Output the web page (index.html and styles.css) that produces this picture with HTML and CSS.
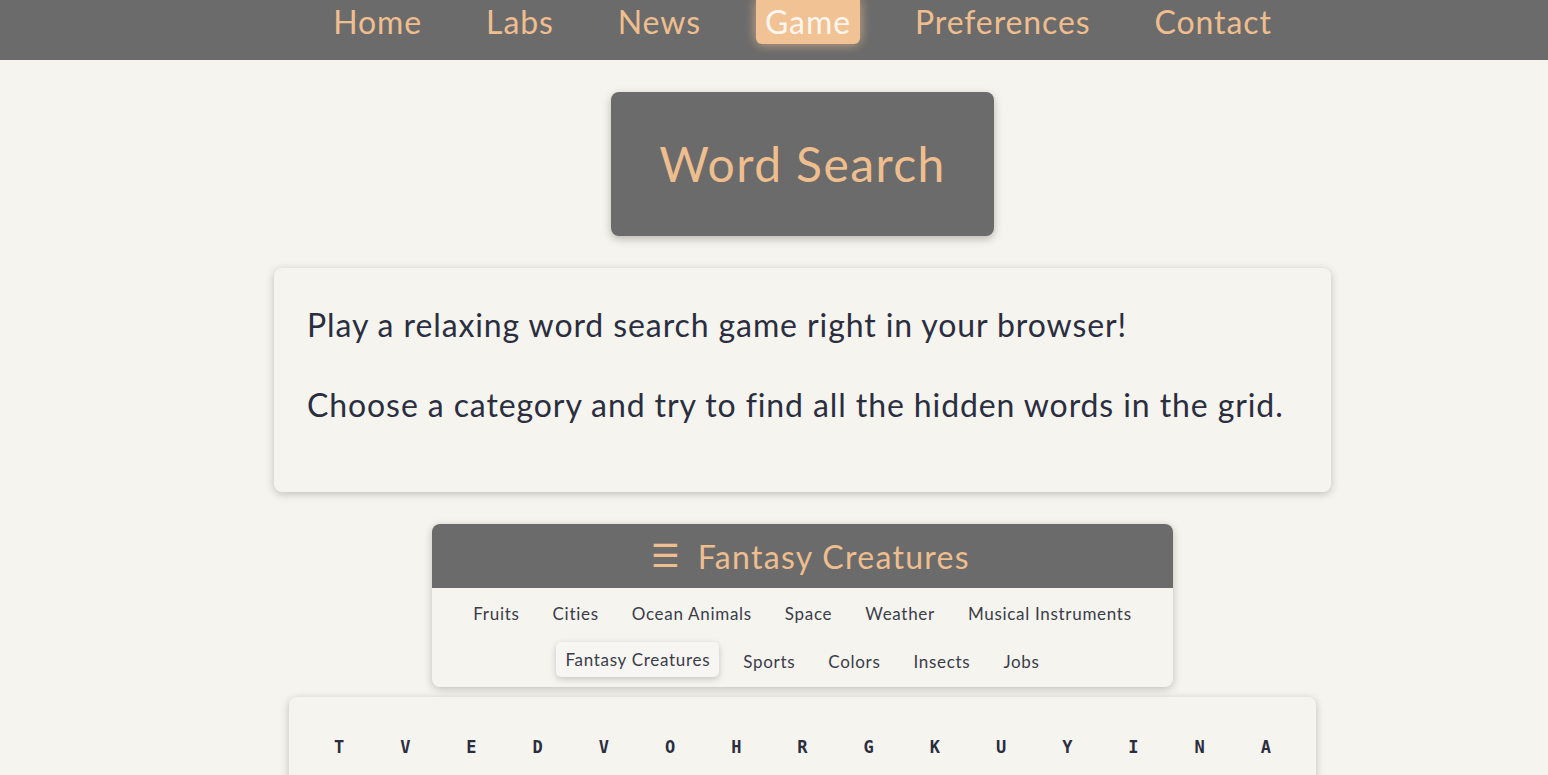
FILE: index.html
```html
<!DOCTYPE html>
<html lang="en">
<head>
<meta charset="utf-8">
<title>Word Search</title>
<link rel="stylesheet" href="styles.css">
</head>
<body>
<nav class="topnav">
  <a class="nav-item">Home</a>
  <a class="nav-item">Labs</a>
  <a class="nav-item">News</a>
  <a class="nav-item active">Game</a>
  <a class="nav-item">Preferences</a>
  <a class="nav-item">Contact</a>
</nav>
<main class="main">
  <div class="title-wrap">
    <h1 class="title-box">Word Search</h1>
  </div>
  <section class="card intro">
    <p>Play a relaxing word search game right in your browser!</p>
    <p>Choose a category and try to find all the hidden words in the grid.</p>
  </section>
  <section class="card cats">
    <div class="cats-head"><span class="burger">☰</span><span>Fantasy Creatures</span></div>
    <div class="cats-list">
      <span class="cat">Fruits</span>
      <span class="cat">Cities</span>
      <span class="cat">Ocean Animals</span>
      <span class="cat">Space</span>
      <span class="cat">Weather</span>
      <span class="cat">Musical Instruments</span>
      <span class="cat active">Fantasy Creatures</span>
      <span class="cat">Sports</span>
      <span class="cat">Colors</span>
      <span class="cat">Insects</span>
      <span class="cat">Jobs</span>
    </div>
  </section>
  <section class="card grid-card">
    <div class="grid">
      <span>T</span><span>V</span><span>E</span><span>D</span><span>V</span><span>O</span><span>H</span><span>R</span><span>G</span><span>K</span><span>U</span><span>Y</span><span>I</span><span>N</span><span>A</span>
      <span>G</span><span>R</span><span>I</span><span>F</span><span>F</span><span>I</span><span>N</span><span>L</span><span>E</span><span>P</span><span>Q</span><span>W</span><span>S</span><span>D</span><span>M</span>
    </div>
  </section>
</main>
</body>
</html>
```

FILE: styles.css
```css
html, body {
  margin: 0;
  padding: 0;
}
body {
  background: #f5f4ee;
  font-family: "Lato", "Open Sans", sans-serif;
  color: #2b2e3f;
}
.topnav {
  height: 60px;
  background: #6b6b6b;
  display: flex;
  justify-content: center;
  align-items: flex-start;
  gap: 46px;
  padding-left: 57px;
}
.nav-item {
  font-size: 32px;
  letter-spacing: 0.9px;
  line-height: 44px;
  height: 44px;
  padding: 0 9px;
  color: #eebe8f;
  border-radius: 0 0 6px 6px;
}
.nav-item.active {
  background: #f0c294;
  color: #fdf6ee;
  box-shadow: 0 0 12px rgba(240, 194, 148, 0.75);
}
.main {
  padding-left: 57px;
  display: flex;
  flex-direction: column;
  align-items: center;
}
.title-wrap {
  margin-top: 32px;
  display: flex;
  justify-content: center;
}
.title-box {
  margin: 0;
  background: #6b6b6b;
  color: #eebe8f;
  font-weight: 400;
  font-size: 48px;
  letter-spacing: 1.4px;
  line-height: 60px;
  padding: 42px 48px;
  border-radius: 8px;
  box-shadow: 0 3px 8px rgba(0, 0, 0, 0.25);
}
.card {
  background: #f5f4ee;
  border-radius: 8px;
  box-shadow: 0 2px 8px rgba(0, 0, 0, 0.22);
  box-sizing: border-box;
}
.intro {
  margin-top: 32px;
  width: 1057px;
  padding: 33px 33px 63px;
}
.intro p {
  margin: 0;
  font-size: 32px;
  letter-spacing: 0.9px;
  line-height: 48px;
}
.intro p + p {
  margin-top: 32px;
}
.cats {
  margin-top: 32px;
  width: 741px;
  overflow: hidden;
}
.cats-head {
  height: 64px;
  background: #6b6b6b;
  color: #eebe8f;
  font-size: 32px;
  letter-spacing: 1.3px;
  display: flex;
  align-items: center;
  justify-content: center;
  gap: 18px;
  padding-left: 16px;
}
.burger {
  font-family: "DejaVu Sans", sans-serif;
  font-size: 32px;
  letter-spacing: 0;
}
.cats-list {
  display: flex;
  flex-wrap: wrap;
  justify-content: center;
  column-gap: 15px;
  row-gap: 13px;
  padding: 8px 20px 8px;
}
.cat {
  font-size: 17px;
  letter-spacing: 0.7px;
  line-height: 35px;
  height: 35px;
  padding: 0 9px;
  color: #3a3c4a;
  border-radius: 5px;
}
.cat.active {
  background: #f7f6f2;
  box-shadow: 0 2px 6px rgba(0, 0, 0, 0.2);
  transform: translateY(-2px);
}
.grid-card {
  margin-top: 10px;
  width: 1027px;
  padding: 17px;
}
.grid {
  display: grid;
  grid-template-columns: repeat(15, 1fr);
  grid-auto-rows: 66px;
  font-family: "DejaVu Sans Mono", monospace;
  font-weight: bold;
  font-size: 17px;
  color: #2b2e3f;
}
.grid span {
  display: flex;
  align-items: center;
  justify-content: center;
}
```
